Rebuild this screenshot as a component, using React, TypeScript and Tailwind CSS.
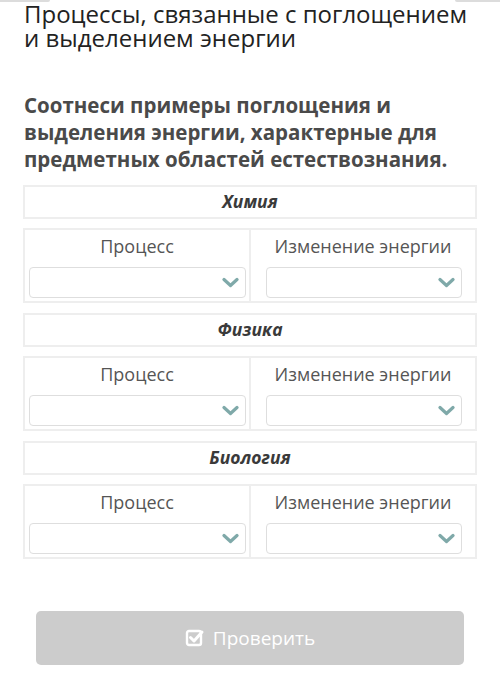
import React from "react";

function Chevron() {
  return (
    <svg width="17" height="11" viewBox="0 0 17 11" className="shrink-0">
      <path d="M2 2.5 L8.5 8.5 L15 2.5" fill="none" stroke="#7fa9a9" strokeWidth="3.2" strokeLinecap="round" strokeLinejoin="round" />
    </svg>
  );
}

function Group({ title }: { title: string }) {
  return (
    <div className="flex flex-col">
      <div className="mx-[23px] h-[34px] border-2 border-[#eeeeee] flex items-center justify-center">
        <span className="text-[17.5px] font-bold italic text-[#3a3a3a] leading-none">{title}</span>
      </div>
      <div className="mx-[23px] mt-[9px] h-[75px] border-2 border-[#eeeeee] flex">
        <div className="w-[226px] border-r-2 border-[#eeeeee] flex flex-col items-center">
          <div className="text-[18px] text-[#555555] leading-none mt-[7px]">Процесс</div>
          <div className="mt-[12px] w-[217px] h-[31px] border border-[#dedede] rounded-[4px] flex items-center justify-end pr-[6px]">
            <Chevron />
          </div>
        </div>
        <div className="flex-1 flex flex-col">
          <div className="text-[18px] text-[#555555] leading-none mt-[7px] text-center">Изменение энергии</div>
          <div className="mt-[12px] ml-[15px] w-[196px] h-[31px] border border-[#dedede] rounded-[4px] flex items-center justify-end pr-[6px]">
            <Chevron />
          </div>
        </div>
      </div>
    </div>
  );
}

export default function App() {
  return (
    <div className="relative w-[500px] h-[679px] bg-white overflow-hidden" style={{ fontFamily: '"Open Sans", "Noto Sans", sans-serif' }}>
      <div className="absolute left-0 top-0 w-[50px] h-[2px] bg-[#dcdcdc] rounded-br" />
      <div className="absolute right-0 top-0 w-[45px] h-[2px] bg-[#dcdcdc] rounded-bl" />
      <div className="flex flex-col">
        <h1 className="pl-[24px] pt-[2px] text-[24px] leading-[24px] text-[#222222] font-normal">
          Процессы, связанные с поглощением<br />и выделением энергии
        </h1>
        <p className="pl-[24px] pr-[20px] mt-[42px] text-[20.5px] leading-[27px] font-bold text-[#4a4a4a]">
          Соотнеси примеры поглощения и выделения энергии, характерные для предметных областей естествознания.
        </p>
        <div className="mt-[12px] flex flex-col gap-[10px]">
          <Group title="Химия" />
          <Group title="Физика" />
          <Group title="Биология" />
        </div>
        <div className="mt-[52px] mx-[36px] h-[54px] bg-[#cccccc] rounded-[5px] flex items-center justify-center gap-[8px] text-white">
          <svg width="20" height="20" viewBox="0 0 20 20">
            <rect x="2" y="3" width="14" height="14" rx="2" fill="none" stroke="white" strokeWidth="2.4" />
            <path d="M5.5 9.5 L9 13 L17 4" fill="none" stroke="white" strokeWidth="3" strokeLinecap="round" strokeLinejoin="round" />
          </svg>
          <span className="text-[19px] leading-none">Проверить</span>
        </div>
      </div>
    </div>
  );
}
